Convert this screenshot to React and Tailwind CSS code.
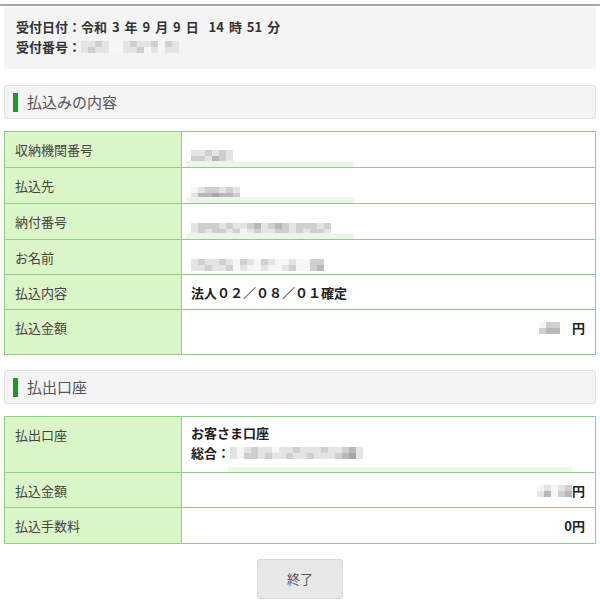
import React from "react";

const F = { fontFamily: '"Noto Sans CJK JP", "Noto Sans", sans-serif' };

function Pix({ rows }) {
  return (
    <div className="inline-flex flex-col">
      {rows.map((r, i) => (
        <div key={i} className="flex">
          {r.map((c, j) => (
            <div key={j} style={{ width: 7, height: 6, background: c }} />
          ))}
        </div>
      ))}
    </div>
  );
}

const g1 = "#e4e4e4", g2 = "#cfcfcf", g3 = "#b8b8b8", g4 = "#a5a5a5", w = "#f6f6f6";

function Strip() {
  return <div className="absolute left-[4px] bottom-0 w-[168px] h-[6px] bg-[#ebf5ea]" />;
}

function Header({ title }) {
  return (
    <div className="mx-[4px] h-[34px] flex items-center rounded-[3px] border border-[#e2e2e2] bg-[#f4f4f4]">
      <div className="ml-[8px] w-[5px] h-[19px] bg-[#1f9a2a]" />
      <div className="ml-[9px] text-[15px] text-[#555]">{title}</div>
    </div>
  );
}

const L = "bg-[#dcf5c8] border border-[#8dcf86] pl-[10px] text-[13px] text-[#444] align-top";
const V = "relative border border-[#8dcf86] pl-[9px] pr-[10px] text-[13px] text-[#222] align-top";

export default function App() {
  return (
    <div style={F} className="w-[600px] bg-white pb-[11px]">
      <div className="h-[6px] border-b-2 border-[#a8a8a8]" />
      <div className="mx-[4px] mt-[1px] h-[62px] rounded-[3px] bg-[#f4f4f4] pl-[12px] pt-[10px] text-[13px] font-bold text-[#333] leading-[20px]">
        <div className="[word-spacing:2px]">受付日付：令和 3 年 9 月 9 日&nbsp; 14 時 51 分</div>
        <div className="flex items-center">
          受付番号：
          <Pix rows={[[g1, g1, g2, g1, w, w, g1, g2, g1, g1, g2, w, g2, g1], [g1, g2, g1, g1, w, w, g1, g1, g2, w, g1, w, g1, g1]]} />
        </div>
      </div>

      <div className="mt-[16px]"><Header title="払込みの内容" /></div>

      <div className="mx-[4px] mt-[12px]">
        <table className="w-full border-collapse">
          <tbody>
            <tr className="h-[36px]">
              <td className={L + " w-[177px] pt-[8px]"}>収納機関番号</td>
              <td className={V + " pt-[9px]"}>
                <Pix rows={[[g1, g1, g2, g1, g2, g1], [g2, g2, g1, g3, g2, g1]]} />
                <Strip />
              </td>
            </tr>
            <tr className="h-[36px]">
              <td className={L + " pt-[8px]"}>払込先</td>
              <td className={V + " pt-[10px]"}>
                <Pix rows={[[w, g1, g2, g2, g1, g2, g1], [g1, g3, g3, g4, g3, g3, g2]]} />
                <Strip />
              </td>
            </tr>
            <tr className="h-[36px]">
              <td className={L + " pt-[8px]"}>納付番号</td>
              <td className={V + " pt-[10px]"}>
                <Pix rows={[[g1, g2, g2, g2, g1, g2, g1, g1, g2, g3, g1, g2, g3, g2, g1, g2, g2, g2, g1, g2], [g1, g2, g1, g2, g2, g1, g2, w, g1, g2, g1, g1, g2, g2, g1, g2, g1, g2, g2, g1]]} />
                <Strip />
              </td>
            </tr>
            <tr className="h-[35px]">
              <td className={L + " pt-[8px]"}>お名前</td>
              <td className={V + " pt-[10px]"}>
                <Pix rows={[[g1, g2, g1, g1, g2, g1, w, g2, g1, w, g2, g1, w, w, g1, w, w, g2, g2], [g1, g1, g2, g1, g1, g2, w, g1, w, w, g1, w, w, g1, g2, w, w, g2, g3]]} />
              </td>
            </tr>
            <tr className="h-[35px]">
              <td className={L + " pt-[8px]"}>払込内容</td>
              <td className={V + " pt-[8px] font-bold"}>法人０２／０８／０１確定</td>
            </tr>
            <tr className="h-[45px]">
              <td className={L + " pt-[8px]"}>払込金額</td>
              <td className={V + " pt-[8px] font-bold"}>
                <div className="flex justify-end items-center gap-[12px] h-[20px]">
                  <Pix rows={[[w, g2, g2], [g2, g3, g3]]} />
                  <span>円</span>
                </div>
              </td>
            </tr>
          </tbody>
        </table>
      </div>

      <div className="mt-[15px]"><Header title="払出口座" /></div>

      <div className="mx-[4px] mt-[12px]">
        <table className="w-full border-collapse">
          <tbody>
            <tr className="h-[56px]">
              <td className={L + " w-[177px] pt-[8px]"}>払出口座</td>
              <td className={V + " pt-[6px] font-bold leading-[20px]"}>
                <div>お客さま口座</div>
                <div className="flex items-center">
                  総合：
                  <Pix rows={[[g1, w, g1, g2, g1, g1, w, g1, g1, g2, g1, g1, g1, g2, g1, g1, g2, g3, g1], [g1, w, g2, g2, g1, g2, g1, g1, g2, g1, g1, g2, g1, g1, g1, g2, g3, g4, g1]]} />
                </div>
                <div className="absolute left-[46px] bottom-0 w-[344px] h-[5px] bg-[#ebf5ea]" />
              </td>
            </tr>
            <tr className="h-[35px]">
              <td className={L + " pt-[8px]"}>払込金額</td>
              <td className={V + " pt-[8px] font-bold"}>
                <div className="flex justify-end items-center h-[20px]">
                  <Pix rows={[[w, g1, w, g1, g2], [g1, g3, w, g2, g3]]} />
                  <span>円</span>
                </div>
              </td>
            </tr>
            <tr className="h-[36px]">
              <td className={L + " pt-[8px]"}>払込手数料</td>
              <td className={V + " pt-[8px] text-right font-bold"}>0円</td>
            </tr>
          </tbody>
        </table>
      </div>

      <div className="flex justify-center mt-[15px]">
        <button className="w-[86px] h-[40px] rounded-[3px] border border-[#d8d8d8] bg-[#e8e8e8] text-[13px] text-[#555]">終了</button>
      </div>
    </div>
  );
}
